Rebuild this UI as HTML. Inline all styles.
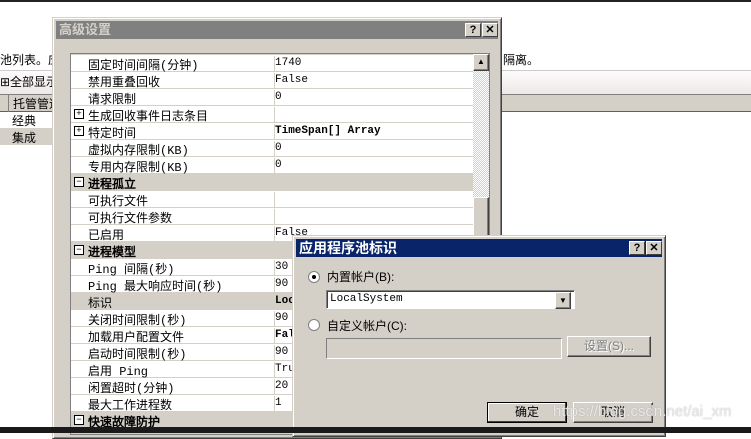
<html><head><style>
body{margin:0;width:751px;height:433px;overflow:hidden;background:#fff;position:relative;font-family:"Liberation Sans","WenQuanYi Zen Hei","Noto Sans CJK SC",sans-serif;font-size:12px;color:#000}
.a{position:absolute}
.mono{font-family:"Liberation Mono","WenQuanYi Zen Hei",monospace;font-size:11px}
.row{position:absolute;left:0;width:402px;height:16px;border-bottom:1px solid #d4d0c8;background:#fff}
.row .n{position:absolute;left:15px;top:1px;width:186px;height:16px;padding-left:2px;border-right:1px solid #d4d0c8;font-size:12px}
.row .v{position:absolute;left:204px;top:2px}
.cat{background:#d4d0c8}
.cat .n{font-weight:bold;border:none}
.pm{position:absolute;left:3px;top:3px;width:8px;height:8px;border:1px solid #000;background:#fff;font-size:9px;line-height:8px;text-align:center}
.btn{position:absolute;background:#d4d0c8;border:1px solid;border-color:#fff #404040 #404040 #fff;box-shadow:inset -1px -1px #808080;text-align:center;line-height:18px}
.tb{position:absolute;width:14px;height:12px;background:#d4d0c8;border:1px solid;border-color:#fff #404040 #404040 #fff;font-size:11px;font-weight:bold;line-height:12px;text-align:center}
</style></head><body>
<div class="a" style="left:0;top:0;width:751px;height:2px;background:#222"></div>
<div class="a" style="left:0;top:51px">池列表。应</div>
<div class="a" style="left:503px;top:51px">隔离。</div>
<div class="a" style="left:0;top:70px;width:751px;height:24px;background:linear-gradient(#fdfbfb,#ece8e6);border-top:1px solid #ccc"></div>
<div class="a" style="left:0;top:73px">⊞全部显示</div>
<div class="a" style="left:0;top:94px;width:751px;height:16px;background:#d4d0c8;border-top:1px solid #808080;border-bottom:1px solid #606060"></div>
<div class="a" style="left:8px;top:95px;border-left:1px solid #808080;padding-left:4px">托管管道</div>
<div class="a" style="left:12px;top:112px">经典</div>
<div class="a" style="left:0;top:128px;width:55px;height:17px;background:#d4d0c8"></div>
<div class="a" style="left:12px;top:129px">集成</div>

<div class="a" style="left:52px;top:17px;width:448px;height:420px;background:#d4d0c8;border:1px solid;border-color:#d4d0c8 #404040 #404040 #d4d0c8;box-shadow:inset 1px 1px #fff,inset -1px -1px #808080">
<div class="a" style="left:3px;top:3px;width:442px;height:18px;background:#808080;color:#d4d0c8;font-weight:bold;font-size:13px;line-height:18px;padding-left:3px;box-sizing:border-box">高级设置</div>
<div class="tb" style="left:412px;top:5px">?</div><div class="tb" style="left:429px;top:5px">✕</div>
<div class="a" style="left:17px;top:35px;width:418px;height:380px;border:1px solid #808080;background:#d4d0c8;overflow:hidden">
<div class="a mono" style="left:0;top:1px;width:402px">
<div class="row" style="top:0"><div class="n">固定时间间隔(分钟)</div><div class="v">1740</div></div>
<div class="row" style="top:17px"><div class="n">禁用重叠回收</div><div class="v">False</div></div>
<div class="row" style="top:34px"><div class="n">请求限制</div><div class="v">0</div></div>
<div class="row" style="top:51px"><div class="pm">+</div><div class="n">生成回收事件日志条目</div></div>
<div class="row" style="top:68px"><div class="pm">+</div><div class="n">特定时间</div><div class="v" style="font-weight:bold">TimeSpan[] Array</div></div>
<div class="row" style="top:85px"><div class="n">虚拟内存限制(KB)</div><div class="v">0</div></div>
<div class="row" style="top:102px"><div class="n">专用内存限制(KB)</div><div class="v">0</div></div>
<div class="row cat" style="top:119px"><div class="pm">−</div><div class="n">进程孤立</div></div>
<div class="row" style="top:136px"><div class="n">可执行文件</div></div>
<div class="row" style="top:153px"><div class="n">可执行文件参数</div></div>
<div class="row" style="top:170px"><div class="n">已启用</div><div class="v">False</div></div>
<div class="row cat" style="top:187px"><div class="pm">−</div><div class="n">进程模型</div></div>
<div class="row" style="top:204px"><div class="n">Ping 间隔(秒)</div><div class="v">30</div></div>
<div class="row" style="top:221px"><div class="n">Ping 最大响应时间(秒)</div><div class="v">90</div></div>
<div class="row" style="top:238px;background:#d4d0c8"><div class="n" style="border:none">标识</div><div class="v" style="font-weight:bold">LocalSystem</div></div>
<div class="row" style="top:255px"><div class="n">关闭时间限制(秒)</div><div class="v">90</div></div>
<div class="row" style="top:272px"><div class="n">加载用户配置文件</div><div class="v" style="font-weight:bold">False</div></div>
<div class="row" style="top:289px"><div class="n">启动时间限制(秒)</div><div class="v">90</div></div>
<div class="row" style="top:306px"><div class="n">启用 Ping</div><div class="v">True</div></div>
<div class="row" style="top:323px"><div class="n">闲置超时(分钟)</div><div class="v">20</div></div>
<div class="row" style="top:340px"><div class="n">最大工作进程数</div><div class="v">1</div></div>
<div class="row cat" style="top:357px"><div class="pm">−</div><div class="n">快速故障防护</div></div>
</div>
<div class="a" style="left:402px;top:0;width:16px;height:380px;background:repeating-conic-gradient(#fff 0 25%,#d4d0c8 0 50%) 0 0/2px 2px"></div>
<div class="btn" style="left:402px;top:0;width:14px;height:15px;line-height:14px;font-size:8px">▲</div>
<div class="btn" style="left:402px;top:143px;width:14px;height:240px"></div>
</div>
</div>

<div class="a" style="left:292px;top:235px;width:372px;height:200px;background:#d4d0c8;border:1px solid;border-color:#d4d0c8 #404040 #404040 #d4d0c8;box-shadow:inset 1px 1px #fff,inset -1px -1px #808080">
<div class="a" style="left:3px;top:3px;width:366px;height:18px;background:#0a246a;color:#fff;font-weight:bold;font-size:14px;line-height:18px;padding-left:3px;box-sizing:border-box">应用程序池标识</div>
<div class="tb" style="left:336px;top:5px">?</div><div class="tb" style="left:353px;top:5px">✕</div>
<div class="a" style="left:15px;top:35px;width:10px;height:10px;border-radius:50%;background:#fff;border:1px solid #808080"><div class="a" style="left:3px;top:3px;width:4px;height:4px;border-radius:50%;background:#000"></div></div>
<div class="a" style="left:34px;top:32px">内置帐户(B):</div>
<div class="a mono" style="left:33px;top:54px;width:244px;height:17px;background:#fff;border:1px solid;border-color:#808080 #fff #fff #808080;box-shadow:inset 1px 1px #404040;line-height:17px;padding-left:3px;box-sizing:content-box">LocalSystem</div>
<div class="btn" style="left:262px;top:56px;width:14px;height:15px;font-size:8px;line-height:15px">▼</div>
<div class="a" style="left:15px;top:83px;width:10px;height:10px;border-radius:50%;background:#fff;border:1px solid #808080"></div>
<div class="a" style="left:34px;top:81px">自定义帐户(C):</div>
<div class="a" style="left:33px;top:102px;width:234px;height:19px;border:1px solid;border-color:#808080 #fff #fff #808080"></div>
<div class="btn" style="left:274px;top:100px;width:82px;height:19px;color:#808080;text-shadow:1px 1px #fff">设置(S)...</div>
<div class="btn" style="left:194px;top:166px;width:78px;height:19px;border-color:#000;box-shadow:inset -1px -1px #404040,inset 1px 1px #fff">确定</div>
<div class="btn" style="left:280px;top:166px;width:78px;height:19px">取消</div>
</div>
<div class="a" style="left:553px;top:403px;font-size:15px;color:rgba(255,255,255,0.75);text-shadow:0 0 1px #999">https://blog.csdn.net/ai_xm</div>
<div class="a" style="left:0;top:427px;width:751px;height:6px;background:#1a1a1a"></div>
</body></html>
